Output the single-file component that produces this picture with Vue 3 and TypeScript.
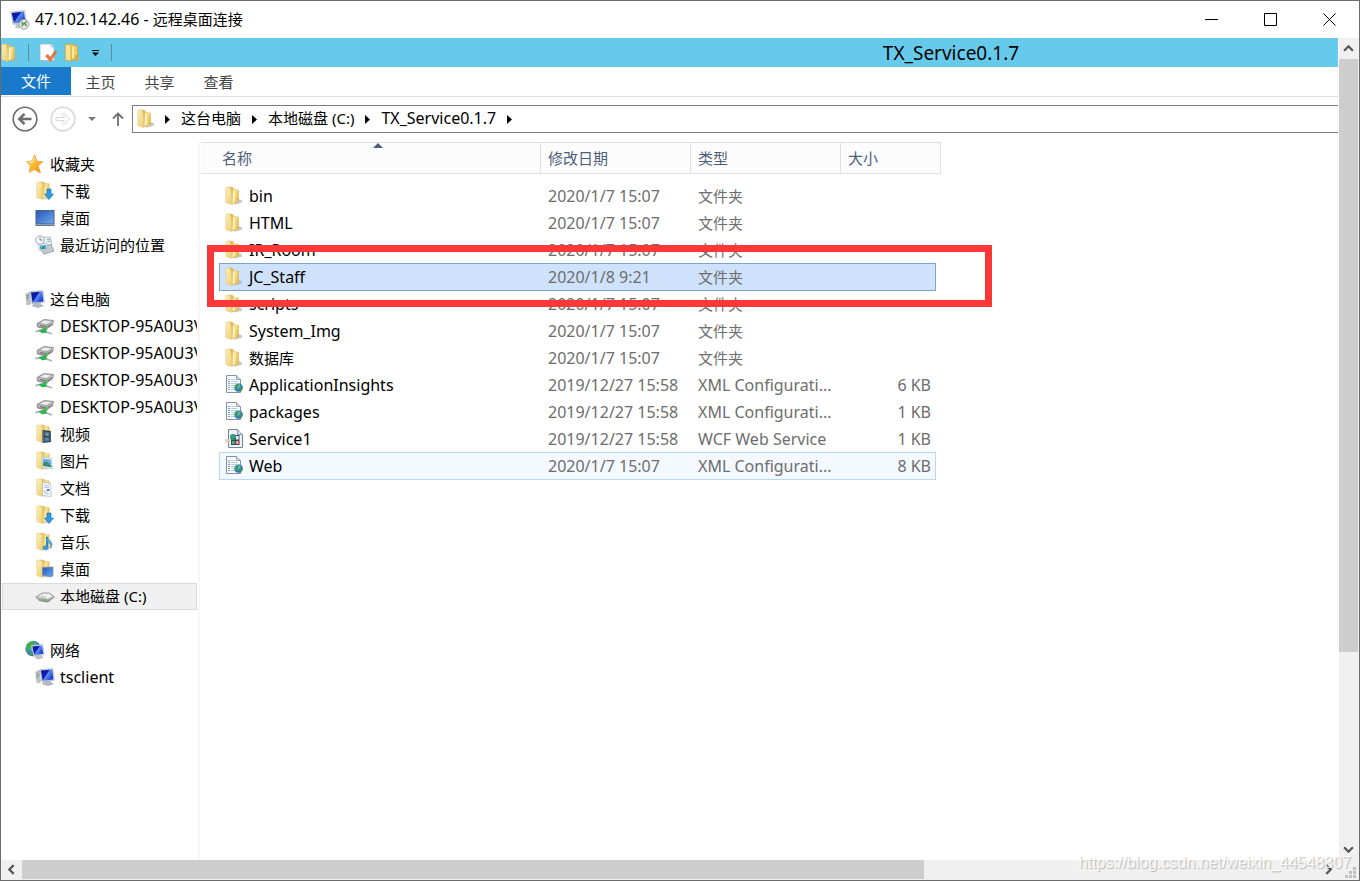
<script setup lang="ts">
interface NavItem {
  label: string
  icon: string
  selected?: boolean
}
interface NavGroup extends NavItem {
  children: NavItem[]
}
interface FileRow {
  name: string
  date: string
  type: string
  size: string
  icon: string
  state?: 'selected' | 'hover'
}

const groups: NavGroup[] = [
  {
    label: '收藏夹',
    icon: 'star',
    children: [
      { label: '下载', icon: 'f-down' },
      { label: '桌面', icon: 'desktop' },
      { label: '最近访问的位置', icon: 'recent' },
    ],
  },
  {
    label: '这台电脑',
    icon: 'pc',
    children: [
      { label: 'DESKTOP-95A0U3V', icon: 'netdrive' },
      { label: 'DESKTOP-95A0U3V', icon: 'netdrive' },
      { label: 'DESKTOP-95A0U3V', icon: 'netdrive' },
      { label: 'DESKTOP-95A0U3V', icon: 'netdrive' },
      { label: '视频', icon: 'f-video' },
      { label: '图片', icon: 'f-pic' },
      { label: '文档', icon: 'f-doc' },
      { label: '下载', icon: 'f-down' },
      { label: '音乐', icon: 'f-music' },
      { label: '桌面', icon: 'f-desk' },
      { label: '本地磁盘 (C:)', icon: 'drive', selected: true },
    ],
  },
  {
    label: '网络',
    icon: 'network',
    children: [{ label: 'tsclient', icon: 'pc' }],
  },
]

const folder = (name: string, date = '2020/1/7 15:07', state?: FileRow['state']): FileRow => ({
  name,
  date,
  type: '文件夹',
  size: '',
  icon: 'folder',
  state,
})

const files: FileRow[] = [
  folder('bin'),
  folder('HTML'),
  folder('IR_Room'),
  folder('JC_Staff', '2020/1/8 9:21', 'selected'),
  folder('scripts'),
  folder('System_Img'),
  folder('数据库'),
  { name: 'ApplicationInsights', date: '2019/12/27 15:58', type: 'XML Configurati...', size: '6 KB', icon: 'xml' },
  { name: 'packages', date: '2019/12/27 15:58', type: 'XML Configurati...', size: '1 KB', icon: 'xml' },
  { name: 'Service1', date: '2019/12/27 15:58', type: 'WCF Web Service', size: '1 KB', icon: 'svc' },
  { name: 'Web', date: '2020/1/7 15:07', type: 'XML Configurati...', size: '8 KB', icon: 'xml', state: 'hover' },
]

const tabs = ['主页', '共享', '查看']
const crumbs = ['这台电脑', '本地磁盘 (C:)', 'TX_Service0.1.7']
const thumb = { vertical: 76, horizontal: 69.6 }

// Latin labels are set one size larger than Chinese ones.
const isLatin = (text: string) => /^[\x20-\x7e]+$/.test(text)
</script>

<template>
  <div class="window">
    <svg class="sprite" aria-hidden="true">
      <defs>
        <linearGradient id="gFlap" x1="0" y1="0" x2="1" y2="1">
          <stop offset="0" stop-color="#fdf2c0" />
          <stop offset="1" stop-color="#edcb6c" />
        </linearGradient>
        <linearGradient id="gBack" x1="0" y1="0" x2="1" y2="0.3">
          <stop offset="0" stop-color="#d3a93a" />
          <stop offset="0.35" stop-color="#e3bf55" />
          <stop offset="0.65" stop-color="#faeaa6" />
          <stop offset="1" stop-color="#e8c050" />
        </linearGradient>
        <linearGradient id="gScreen" x1="0" y1="0" x2="1" y2="0.6">
          <stop offset="0" stop-color="#050f8e" />
          <stop offset="0.5" stop-color="#0c22b8" />
          <stop offset="0.56" stop-color="#5f8cf2" />
          <stop offset="1" stop-color="#1a3fd0" />
        </linearGradient>
        <linearGradient id="gDesk" x1="0" y1="0" x2="1" y2="1">
          <stop offset="0" stop-color="#2458b4" />
          <stop offset="1" stop-color="#6fa8f0" />
        </linearGradient>
        <linearGradient id="gStar" x1="0" y1="0" x2="1" y2="1">
          <stop offset="0" stop-color="#ffe48a" />
          <stop offset="0.5" stop-color="#fdb92c" />
          <stop offset="1" stop-color="#f08a12" />
        </linearGradient>
        <radialGradient id="gGlobe" cx="0.35" cy="0.3" r="0.8">
          <stop offset="0" stop-color="#b8e4f4" />
          <stop offset="0.5" stop-color="#3a8cc8" />
          <stop offset="1" stop-color="#144a86" />
        </radialGradient>
        <linearGradient id="gDrive" x1="0" y1="0" x2="0" y2="1">
          <stop offset="0" stop-color="#ececec" />
          <stop offset="1" stop-color="#8e8e8e" />
        </linearGradient>
      </defs>
      <symbol id="folder" viewBox="0 0 18 20">
        <path d="M12 12.500l4.500 1.500.7 2.400L10 18.400l-3-1z" fill="#a4a9b0" opacity=".65" />
        <path d="M4.500 1l3.500.4.5 2 5 .8V16L7 17.800z" fill="url(#gBack)" stroke="#dcb248" stroke-width=".5" />
        <path d="M8.500 4.500v12" stroke="#fff9dc" stroke-width="1" />
        <path d="M.8 1.500L4.500.8l1.500 2.400 1 8.500V18.600L.8 16.400z" fill="url(#gFlap)" stroke="#dfc06a" stroke-width=".5" />
      </symbol>
      <symbol id="f-base" viewBox="0 0 18 20">
        <path d="M12 15l4.500 1-5 2.500-5-.5z" fill="#b9bcc0" opacity=".6" />
        <path d="M4.500 1l4 .5.5.9 4.200.4V15.500L6 18z" fill="url(#gBack)" stroke="#dcb95a" stroke-width=".5" />
        <path d="M.8 1.500L4.500.8 6.800 3v15.500L.8 16.500z" fill="url(#gFlap)" stroke="#dfc06a" stroke-width=".5" />
      </symbol>
      <symbol id="f-down" viewBox="0 0 18 20">
        <use href="#f-base" width="18" height="20" />
        <path d="M11 8h4v5h2.500L13 18.600 8.500 13H11z" fill="#2a9be4" stroke="#1a70b8" stroke-width=".6" />
      </symbol>
      <symbol id="f-video" viewBox="0 0 18 20">
        <use href="#f-base" width="18" height="20" />
        <path d="M6.500 6l8.500 1v11l-8.500 1z" fill="#303c48" />
        <path d="M8.500 7.500l4.500.5v4l-4.500.3zM8.500 13.500l4.500-.3v4l-4.500.5z" fill="#2684c0" />
        <path d="M10 9l2.500 1.500-1 1.500zM9 16l3-2" stroke="#e88a3c" fill="#e88a3c" stroke-width=".7" />
        <path d="M7.300 7.500v11M14.200 7.500v10" stroke="#c7d0d8" stroke-width=".7" stroke-dasharray="1 1" />
      </symbol>
      <symbol id="f-pic" viewBox="0 0 18 20">
        <use href="#f-base" width="18" height="20" />
        <path d="M6 6l9.500 1.200 1 11-10-2.200z" fill="#f6fbff" stroke="#a8b8c8" stroke-width=".6" />
        <path d="M7 7.500l7.700 1 .8 5-8.500-.5z" fill="#64b2ea" />
        <path d="M7 12l3-2 5.500 4.500v2L7 15z" fill="#3d8a72" />
      </symbol>
      <symbol id="f-doc" viewBox="0 0 18 20">
        <use href="#f-base" width="18" height="20" />
        <path d="M6.500 4l8 1.500.8 13-8.800-1z" fill="#f5f8fb" stroke="#9eacba" stroke-width=".6" />
        <path d="M8 7l5 .8M8 9l5 .8M8 13l3 .4M8 15l5 .7" stroke="#8ea6c2" stroke-width=".7" />
        <path d="M11 11h2.500v2H11z" fill="#4a80be" />
      </symbol>
      <symbol id="f-music" viewBox="0 0 18 20">
        <use href="#f-base" width="18" height="20" />
        <path d="M11 5v10.500" stroke="#1d79bd" stroke-width="1.700" />
        <path d="M11 4.500c.5 3.500 5 4 5 8 0 1.500-.6 2.500-1.500 3.500.7-3.500-.5-5-3.500-6z" fill="#4eaee8" stroke="#1d79bd" stroke-width=".5" />
        <ellipse cx="9.500" cy="15.800" rx="2.600" ry="2" fill="#3aa0e0" stroke="#1d79bd" stroke-width=".5" />
      </symbol>
      <symbol id="f-desk" viewBox="0 0 18 20">
        <use href="#f-base" width="18" height="20" />
        <path d="M6.500 8.500L17 8v8.500l-1.500 1.500-9-1.800z" fill="url(#gDesk)" stroke="#6d87a8" stroke-width=".7" />
      </symbol>
      <symbol id="desktop" viewBox="0 0 20 18">
        <rect x=".5" y="1" width="19" height="16" fill="#49617f" />
        <rect x="1.500" y="2" width="17" height="12.500" fill="url(#gDesk)" />
        <path d="M1 15.800h18" stroke="#a8b7ca" stroke-width="1" />
      </symbol>
      <symbol id="star" viewBox="0 0 18 20">
        <path d="M8.500.8l2.400 6.500 6 .2-4.700 4.600 2.300 7-6-3.500-5.200 2.700 1-6.300L.6 7.700l5.500-.7z" fill="url(#gStar)" stroke="#e9982e" stroke-width=".7" stroke-linejoin="round" />
        <path d="M8.300 4l-1.500 4-4 .5" fill="none" stroke="#fff4c4" stroke-width="1" />
      </symbol>
      <symbol id="recent" viewBox="0 0 20 20">
        <path d="M7 2.500L15.500 2l1.500 8-8 1.500z" fill="#eef3f7" stroke="#9aa6b2" stroke-width=".7" />
        <path d="M4 12l12-2.500L19 16l-10 3.200z" fill="#c4cad0" stroke="#848d96" stroke-width=".7" />
        <path d="M3 9.500l8.500-1.500 1.500 6-8.500 1.500z" fill="#f7fafc" stroke="#9aa6b2" stroke-width=".6" />
        <path d="M4.500 10.800l6.300-1 .9 3.600-6.300 1z" fill="#4aa8dc" />
        <path d="M5.500 14.300l2.500-2.500 3.500 1.500z" fill="#408a64" />
        <circle cx="5" cy="5" r="4.300" fill="#f4f7fa" stroke="#97a2ae" stroke-width=".9" />
        <path d="M5 2.300V5h2.500" fill="none" stroke="#52657c" stroke-width=".8" />
        <path d="M12 4.500l3-.3M12.300 6.500l3-.4" stroke="#5e93c4" stroke-width=".8" />
      </symbol>
      <symbol id="pc" viewBox="0 0 20 18">
        <path d="M.8 4l4-1.800.6 12L2 14.500z" fill="#c3c8cd" stroke="#8a9299" stroke-width=".5" />
        <path d="M2 6l1.600-.4M2.200 8l1.500-.3" stroke="#3f4e59" stroke-width=".8" />
        <path d="M2 7.500v3" stroke="#54b04c" stroke-width=".8" />
        <path d="M11 13l4-1 .7 2.700 2.500 1.100-5 1.700-6-1.700z" fill="#b6bcc2" stroke="#868e96" stroke-width=".5" />
        <path d="M5.200 1.600L18 .6l1.400 11.600L7 13.700z" fill="#d4dbe3" stroke="#97a1ad" stroke-width=".5" />
        <path d="M6 2.400L17.200 1.500l1.200 9.900L7.600 12.700z" fill="url(#gScreen)" />
      </symbol>
      <symbol id="rdp" viewBox="0 0 20 20">
        <path d="M6 14l5-1 2 4-5 1.500-3-1z" fill="#c2c7cc" />
        <path d="M.8 2L14.500.6l2 12L3.200 14.400z" fill="#d9dfe6" stroke="#9aa5b2" stroke-width=".6" />
        <path d="M1.700 2.900L13.800 1.600l1.600 10L4 13.300z" fill="url(#gScreen)" />
        <circle cx="14" cy="14.300" r="4.900" fill="#dfe3de" stroke="#8f9892" stroke-width=".8" />
        <path d="M11.500 12l2 2-2 2.200M16.600 11.500l-2 2 2 2.400" fill="none" stroke="#3d8a49" stroke-width="1.200" />
      </symbol>
      <symbol id="network" viewBox="0 0 20 20">
        <circle cx="8" cy="8.500" r="7.700" fill="url(#gGlobe)" />
        <path d="M1.500 5.500C4 1.500 8 .6 10.500 1.600L9 5 6 6l-.5 4L2.500 11zM4 12l3 1 1 2.500-2 .3z" fill="#43ad3f" />
        <path d="M12 15l4 0 .5 1.700 1.500.7-4 1.500-4-1.500z" fill="#c2c7cc" stroke="#8f969d" stroke-width=".5" />
        <path d="M6.500 5.500L17.800 4.400l1.600 10.200L8.500 16z" fill="#d9dfe6" stroke="#a2aab4" stroke-width=".5" />
        <path d="M7.400 6.400L17 5.400l1.300 8.400-9 1.200z" fill="url(#gScreen)" />
      </symbol>
      <symbol id="drive" viewBox="0 0 20 18">
        <path d="M.8 10L7.500 6h7l5 4-6.500 5-8.500-1.200z" fill="url(#gDrive)" stroke="#808080" stroke-width=".7" />
        <path d="M2 9.800L8 6.600h6l4 2.800-5.500 2.600z" fill="#f3f3f3" stroke="#a0a0a0" stroke-width=".5" />
        <path d="M6 9.200l6 1" stroke="#b8b8b8" stroke-width=".8" />
        <path d="M9 12.300l2 .3v1.800l-2-.4z" fill="#42c63e" />
      </symbol>
      <symbol id="netdrive" viewBox="0 0 20 18">
        <path d="M2 6.500L9 2.500l9.500 1-1 4.500-6.500 4-8.500-2z" fill="url(#gDrive)" stroke="#6e6e6e" stroke-width=".7" />
        <path d="M3.500 6.300L9.500 3l7.800 1-5.500 3.500z" fill="#ededed" stroke="#858585" stroke-width=".6" />
        <path d="M5 8.500l5.500 1.300M13 9.500l4-3" stroke="#555" stroke-width=".7" />
        <path d="M11.500 8.500v4.300" stroke="#49c04e" stroke-width="1.600" />
        <path d="M.5 14.500l5-.8M11 15l6 1.800" stroke="#b0b4b8" stroke-width="1.800" />
        <path d="M4 13.200l6.500-1.200 1 3.200-4.500.8z" fill="#1fc04a" stroke="#12873a" stroke-width=".5" />
      </symbol>
      <symbol id="xml" viewBox="0 0 18 20">
        <path d="M1.500.5h10L15.500 4.500v13H1.500z" fill="#fbfdff" stroke="#7f92a8" stroke-width="1" />
        <path d="M11.500.5v4h4" fill="#cfdbe8" stroke="#7f92a8" stroke-width=".8" />
        <path d="M3 4.500h2M3 6.500h2M3 8.500h2M3 10.500h2M3 12.500h2M3 14.500h2" stroke="#6f9fe4" stroke-width="1" />
        <path d="M6 4.500h4M6 6.500h6.500M6 8.500h6M6 10.500h4M6 12.500h3M6 14.500h4" stroke="#b4c4d8" stroke-width=".9" />
        <circle cx="13.500" cy="12.500" r="4.300" fill="url(#gGlobe)" />
        <path d="M9.600 11.500c1.500-2.500 3-3 4.500-2.300l-1 2.300-.5 4zM14.500 12.500l3-.5c.5 1.500-1 3.500-3 4z" fill="#3c9d43" />
      </symbol>
      <symbol id="svc" viewBox="0 0 18 20">
        <path d="M3.500.5h9L17.500 5.500v13H3.500z" fill="#eff3f8" stroke="#71859f" stroke-width="1" />
        <path d="M12.500.5v5h5" fill="#d0dae6" stroke="#71859f" stroke-width=".8" />
        <path d="M0 11h5M1 13h4" stroke="#d8d0a4" stroke-width="1.400" />
        <path d="M6 6h8.500v10H6z" fill="#33485e" />
        <circle cx="8" cy="8" r="3" fill="#2f8fa0" />
        <path d="M6 7l3-1.500L10.500 8 8 10z" fill="#38a648" />
        <path d="M6.800 12h3v3h-3z" fill="#5fae6c" />
        <path d="M11 7h2.700v3.500H11z" fill="#e9eef4" />
        <path d="M11 12h2.700v3H11z" fill="#e9eef4" stroke="#c93a3a" stroke-width=".8" />
      </symbol>
      <symbol id="props" viewBox="0 0 18 20">
        <path d="M1 1h11l3 3v13.500H1z" fill="#fcfdfe" stroke="#a8b6c2" stroke-width=".8" />
        <path d="M12 1v3h3" fill="#dfe7ee" stroke="#a8b6c2" stroke-width=".7" />
        <path d="M6.500 13l2.500-1.500 2.200 3L15.800 8l2 .5-6.300 10.200z" fill="#f07a3c" stroke="#d65c20" stroke-width=".6" />
      </symbol>
      <symbol id="newfolder" viewBox="0 0 18 20">
        <path d="M3 1l6 .2 1 1.200 3.500.3V17H6z" fill="#f2d160" stroke="#c99a2e" stroke-width=".7" />
        <path d="M1.200 1.800L4.500 1l2.500 2.500v15L1.200 16.800z" fill="#f9e290" stroke="#c99a2e" stroke-width=".7" />
        <path d="M9 4v11" stroke="#fff3bd" stroke-width="1.400" />
        <path d="M11 12h3.500v5H10z" fill="#e5a63a" />
      </symbol>
    </svg>

    <header class="titlebar">
      <svg class="icon20"><use href="#rdp" /></svg>
      <h1><span class="latin">47.102.142.46 - </span>远程桌面连接</h1>
      <div class="controls">
        <button type="button" aria-label="最小化">
          <svg viewBox="0 0 13 13"><path d="M0 6.500h13" /></svg>
        </button>
        <button type="button" aria-label="最大化">
          <svg viewBox="0 0 13 13"><path d="M.5.5h12v12H.5z" /></svg>
        </button>
        <button type="button" aria-label="关闭">
          <svg viewBox="0 0 13 13"><path d="M.5.5l12 12M12.500.5l-12 12" /></svg>
        </button>
      </div>
    </header>

    <div class="view">
      <main class="remote">
        <div class="quickbar">
          <svg class="icon-folder"><use href="#folder" /></svg>
          <i class="bar"></i>
          <button type="button" aria-label="属性"><svg class="icon-folder"><use href="#props" /></svg></button>
          <button type="button" aria-label="新建文件夹"><svg class="icon-folder"><use href="#newfolder" /></svg></button>
          <button type="button" class="more" aria-label="自定义快速访问工具栏">
            <svg width="7" height="6" viewBox="0 0 7 6"><path d="M0 .5h7" stroke="#000" /><path d="M0 2.500h7L3.500 6z" /></svg>
          </button>
          <i class="bar last"></i>
          <h2>TX_Service0.1.7</h2>
        </div>

        <nav class="tabs" aria-label="功能区">
          <button type="button" class="file-tab">文件</button>
          <button v-for="tab in tabs" :key="tab" type="button">{{ tab }}</button>
        </nav>

        <div class="address-row">
          <button type="button" aria-label="后退" class="round">
            <svg viewBox="0 0 26 26"><circle cx="13" cy="13" r="11.800" stroke-width="1.600" /><path d="M19.500 13H8M12.500 7.800L7.300 13l5.200 5.200" stroke-width="2.600" /></svg>
          </button>
          <button type="button" aria-label="前进" class="round off">
            <svg viewBox="0 0 26 26"><circle cx="13" cy="13" r="11.800" stroke-width="1.600" /><path d="M6 11.500h8.500L12 8.500l1.500-1.500 6 6-6 6-1.500-1.500 2.500-3H6z" /></svg>
          </button>
          <button type="button" aria-label="最近浏览的位置" class="recent">
            <svg width="8" height="4" viewBox="0 0 8 4"><path d="M0 0h8L4 4z" fill="#7b7b7b" /></svg>
          </button>
          <button type="button" aria-label="上移" class="up">
            <svg width="12" height="14" viewBox="0 0 12 14"><path d="M6 14V1.800M1 6.500l5-5 5 5" fill="none" stroke="#707070" stroke-width="1.800" /></svg>
          </button>
          <nav class="address" aria-label="地址">
            <svg class="icon-folder"><use href="#folder" /></svg>
            <svg class="chev" viewBox="0 0 5 9"><path d="M0 0l5 4.500L0 9z" /></svg>
            <template v-for="crumb in crumbs" :key="crumb">
              <a href="#" :class="{ latin: isLatin(crumb) }">{{ crumb }}</a>
              <svg class="chev" viewBox="0 0 5 9"><path d="M0 0l5 4.500L0 9z" /></svg>
            </template>
          </nav>
        </div>

        <div class="panes">
          <nav class="sidebar" aria-label="导航窗格">
            <ul v-for="group in groups" :key="group.label">
              <li>
                <a href="#" class="root"><svg class="icon20"><use :href="'#' + group.icon" /></svg><span>{{ group.label }}</span></a>
              </li>
              <li v-for="(item, i) in group.children" :key="i">
                <a href="#" :class="{ selected: item.selected, latin: isLatin(item.label) }"><svg class="icon20"><use :href="'#' + item.icon" /></svg><span>{{ item.label }}</span></a>
              </li>
            </ul>
          </nav>

          <section class="files">
            <table>
              <colgroup>
                <col class="c-gutter" />
                <col class="c-name" />
                <col class="c-date" />
                <col class="c-type" />
                <col class="c-size" />
                <col class="c-end" />
              </colgroup>
              <thead>
                <tr>
                  <th colspan="2" class="sorted" aria-sort="ascending">
                    名称
                    <svg class="sort" viewBox="0 0 10 5"><path d="M0 5h10L5 0z" /></svg>
                  </th>
                  <th>修改日期</th>
                  <th>类型</th>
                  <th colspan="2">大小</th>
                </tr>
              </thead>
              <tbody>
                <tr v-for="file in files" :key="file.name" :class="file.state">
                  <td class="gutter"></td>
                  <td class="cell name" :class="{ latin: isLatin(file.name) }">
                    <div><svg class="icon-folder"><use :href="'#' + file.icon" /></svg>{{ file.name }}</div>
                  </td>
                  <td class="cell latin">{{ file.date }}</td>
                  <td class="cell" :class="{ latin: isLatin(file.type) }">{{ file.type }}</td>
                  <td class="cell size latin">{{ file.size }}</td>
                  <td class="gutter"></td>
                </tr>
              </tbody>
            </table>
            <div class="marker"></div>
          </section>
        </div>
      </main>

      <div class="vscroll">
        <button type="button" aria-label="向上滚动"><svg viewBox="0 0 10 10"><path d="M1 7l4-4 4 4" /></svg></button>
        <div class="track"><div class="thumb" :style="{ height: thumb.vertical + '%' }"></div></div>
        <button type="button" aria-label="向下滚动"><svg viewBox="0 0 10 10"><path d="M1 3l4 4 4-4" /></svg></button>
      </div>
    </div>

    <div class="hscroll">
      <button type="button" aria-label="向左滚动"><svg viewBox="0 0 10 10"><path d="M7 1L3 5l4 4" /></svg></button>
      <div class="track"><div class="thumb" :style="{ width: thumb.horizontal + '%' }"></div></div>
      <button type="button" aria-label="向右滚动"><svg viewBox="0 0 10 10"><path d="M3 1l4 4-4 4" /></svg></button>
      <div class="grip">
        <svg width="11" height="11" viewBox="0 0 11 11"><path d="M8 0h3v3H8zM4 4h3v3H4zM8 4h3v3H8zM0 8h3v3H0zM4 8h3v3H4zM8 8h3v3H8z" /></svg>
      </div>
    </div>

    <p class="watermark">https://blog.csdn.net/weixin_44548307</p>
  </div>
</template>

<style>
body {
  margin: 0;
  background: #fff;
}
</style>

<style scoped>
* {
  box-sizing: border-box;
}
.window {
  position: relative;
  display: flex;
  flex-direction: column;
  height: 100vh;
  border: 1px solid #6b6b6b;
  background: #fff;
  color: #000;
  font: 15px/20px "Noto Sans", "Noto Sans CJK SC", sans-serif;
  overflow: hidden;
}
.latin {
  font-size: 16px;
}
.sprite {
  position: absolute;
  width: 0;
  height: 0;
}
button {
  display: flex;
  align-items: center;
  justify-content: center;
  padding: 0;
  border: 0;
  background: none;
  color: inherit;
  font: inherit;
}
a {
  color: inherit;
  text-decoration: none;
}
h1,
h2 {
  margin: 0;
  font-weight: 400;
}
.icon20 {
  flex: none;
  width: 20px;
  height: 20px;
}
.icon-folder {
  flex: none;
  width: 18px;
  height: 20px;
}

.titlebar {
  flex: none;
  display: flex;
  align-items: center;
  height: 37px;
  padding-left: 9px;
}
.titlebar h1 {
  flex: 1;
  margin-left: 5px;
  padding-bottom: 2px;
  font-size: 15px;
}
.controls {
  display: flex;
  align-self: stretch;
}
.controls button {
  width: 59px;
}
.controls svg {
  width: 13px;
  height: 13px;
  fill: none;
  stroke: #000;
}

.view {
  flex: 1;
  display: flex;
  min-height: 0;
}
.remote {
  flex: 1;
  display: flex;
  flex-direction: column;
  min-width: 0;
  margin-right: 1px;
}
.quickbar {
  flex: none;
  display: flex;
  align-items: center;
  height: 29px;
  background: #66caea;
}
.quickbar .bar {
  width: 1px;
  height: 17px;
  margin: 0 6px 0 9px;
  background: #5f8a9b;
}
.quickbar .bar.last {
  margin-left: 6px;
}
.quickbar button {
  width: 25px;
}
.quickbar .more {
  width: 20px;
}
.quickbar h2 {
  flex: 1;
  padding-left: 530px;
  padding-right: 84px;
  text-align: center;
  font-size: 19px;
  line-height: 24px;
}

.tabs {
  flex: none;
  display: flex;
  height: 30px;
  border-bottom: 1px solid #dadbdc;
}
.tabs button {
  width: 59px;
  color: #444;
}
.tabs .file-tab {
  width: 70px;
  margin-bottom: 1px;
  background: #1979ca;
  color: #fff;
}

.address-row {
  flex: none;
  display: flex;
  align-items: center;
  padding: 8px 0 9px 11px;
}
.round {
  width: 26px;
  height: 26px;
  margin-right: 12px;
}
.round svg {
  width: 26px;
  height: 26px;
  fill: none;
  stroke: #6d6d6d;
}
.round.off svg {
  stroke: #d8d8d8;
}
.recent {
  width: 8px;
  height: 26px;
}
.up {
  width: 28px;
  height: 26px;
  margin-left: 8px;
}
.address {
  flex: 1;
  display: flex;
  align-items: center;
  height: 28px;
  padding-left: 4px;
  border: 1px solid #7d7d7d;
  border-right: 0;
}
.address a {
  margin: 0 11px;
  padding-bottom: 2px;
}
.address .chev {
  width: 5px;
  height: 9px;
}
.address .icon-folder {
  margin-right: 10px;
}

.panes {
  flex: 1;
  display: flex;
  min-height: 0;
}
.sidebar {
  flex: none;
  width: 199px;
  margin-right: 1px;
  padding: 9px 1px 0 1px;
  border-right: 2px solid #f7f7f7;
}
.sidebar ul {
  margin: 0 0 27px;
  padding: 0;
  list-style: none;
}
.sidebar a {
  display: flex;
  align-items: center;
  height: 27px;
  padding: 0 0 2px 32px;
  border: 1px solid transparent;
  border-right-width: 0;
  overflow: hidden;
  white-space: nowrap;
}
.sidebar a.root {
  padding-left: 22px;
}
.sidebar a.selected {
  border: 1px solid #dadada;
  background: #f0f0f0;
}
.sidebar span {
  margin-left: 5px;
}

.files {
  position: relative;
  flex: 1;
  min-width: 0;
}
table {
  width: 740px;
  table-layout: fixed;
  border-collapse: separate;
  border-spacing: 0;
}
.c-gutter {
  width: 18px;
}
.c-name {
  width: 322px;
}
.c-date,
.c-type {
  width: 150px;
}
.c-size {
  width: 95px;
}
.c-end {
  width: 5px;
}
th {
  height: 32px;
  padding: 0 0 0 7px;
  border: 1px solid #e0e0e0;
  border-left: 0;
  background: #fcfcfc;
  color: #4c607a;
  font-weight: 400;
  text-align: left;
}
th.sorted {
  position: relative;
  padding-left: 21px;
}
.sort {
  position: absolute;
  top: 0;
  left: 172px;
  width: 10px;
  height: 5px;
  fill: #4c607a;
}
tbody::before {
  content: "";
  display: block;
  height: 8px;
}
td {
  height: 27px;
  padding: 0 0 0 7px;
  color: #6d6d6d;
  white-space: nowrap;
}
td.gutter {
  padding: 0;
}
td.name {
  padding-left: 6px;
  color: #000;
}
td.name div {
  display: flex;
  align-items: center;
  gap: 6px;
}
td.size {
  padding-right: 5px;
  text-align: right;
}
.selected .cell {
  --edge: #7da2ce;
  background: #cfe2fc;
}
.hover .cell {
  --edge: #b8d6f6;
  background: #f4f9ff;
}
.selected .cell,
.hover .cell {
  box-shadow: inset 0 1px var(--edge), 0 1px var(--edge);
}
.selected .name,
.hover .name {
  box-shadow: inset 0 1px var(--edge), inset 1px 0 var(--edge), 0 1px var(--edge);
}
.selected .size,
.hover .size {
  box-shadow: inset 0 1px var(--edge), inset -1px 0 var(--edge), 0 1px var(--edge);
}
.marker {
  position: absolute;
  top: 103px;
  left: 6px;
  width: 785px;
  height: 62px;
  border: 7px solid #fc3737;
  pointer-events: none;
}

.vscroll {
  flex: none;
  display: flex;
  flex-direction: column;
  width: 20px;
  padding-right: 1px;
  background: #f0f0f0;
}
.vscroll button {
  height: 21px;
}
.vscroll svg,
.hscroll button svg {
  width: 11px;
  height: 11px;
  fill: none;
  stroke: #555;
  stroke-width: 2;
}
.track {
  flex: 1;
}
.thumb {
  background: #cdcdcd;
}
.hscroll {
  flex: none;
  display: flex;
  height: 20px;
  padding-bottom: 1px;
  background: #f0f0f0;
}
.hscroll button {
  width: 21px;
}
.hscroll .thumb {
  height: 100%;
}
.grip {
  display: flex;
  align-items: flex-end;
  justify-content: flex-end;
  width: 20px;
  padding: 0 3px 1px 0;
}
.grip svg {
  fill: #bfbfbf;
}
.watermark {
  position: absolute;
  right: 8px;
  bottom: 7px;
  margin: 0;
  color: rgba(255, 255, 255, 0.85);
  font: 16px/20px "Liberation Sans", Arial, sans-serif;
  text-shadow: 1px 1px 1px rgba(0, 0, 0, 0.25);
  pointer-events: none;
}
</style>
